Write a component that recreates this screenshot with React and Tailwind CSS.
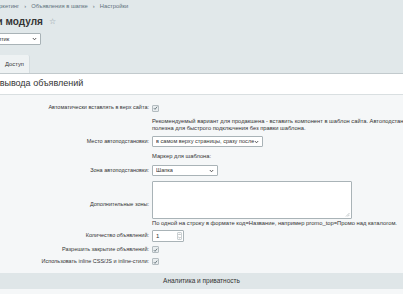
import React from 'react';

// Bitrix-style module settings page, cropped on the left edge
function Check() {
    return (
        <span className="inline-flex items-center justify-center w-[7px] h-[7px] border border-[#b3bcc0] bg-[#e9edef] rounded-[1px]">
            <svg width="6" height="6" viewBox="0 0 6 6">
                <path d="M1 3.2 L2.4 4.6 L5 1.4" stroke="#55666e" strokeWidth="1" fill="none" />
            </svg>
        </span>
    );
}

function Chevron() {
    return (
        <svg width="5" height="4" viewBox="0 0 5 4" className="shrink-0">
            <path d="M0.8 1 L2.5 2.8 L4.2 1" stroke="#333" strokeWidth="0.8" fill="none" />
        </svg>
    );
}

function Select({ width, children }) {
    return (
        <div
            className="h-[11px] bg-white border border-[#a9b3b7] rounded-[1px] flex items-center justify-between pl-[3px] pr-[3px] text-[5.6px] text-[#333] leading-none"
            style={{ width }}
        >
            <span className="whitespace-nowrap overflow-hidden">{children}</span>
            <Chevron />
        </div>
    );
}

function Row({ label, children, className = 'items-center' }) {
    return (
        <div className={`flex ${className}`}>
            <div className="w-[152px] shrink-0 text-right pr-[3px] text-[5.5px] leading-none text-[#333] whitespace-nowrap">{label}</div>
            <div className="flex-1 min-w-0">{children}</div>
        </div>
    );
}

export default function App() {
    return (
        <div className="w-[403px] h-[294px] overflow-hidden bg-[#e1e8ea] font-['Liberation_Sans',Arial,sans-serif] text-[#333]">
            {/* breadcrumbs */}
            <div className="h-[12px] flex items-center gap-[5px] -ml-[9px] text-[5.8px] text-[#60717b] whitespace-nowrap pt-[1px]">
                <span>Маркетинг</span>
                <span>›</span>
                <span>Объявления в шапке</span>
                <span>›</span>
                <span>Настройки</span>
            </div>

            {/* title */}
            <div className="h-[19px] flex items-center -ml-[50px] whitespace-nowrap">
                <span className="text-[10px] font-bold text-[#333]">Настройки модуля</span>
                <span className="ml-[6px] text-[8px] text-[#8a979e] leading-none">☆</span>
            </div>

            {/* site select */}
            <div className="mt-[2px] -ml-[20px]">
                <div className="w-[61px] h-[12px] bg-white border border-[#a9b3b7] rounded-[1px] flex items-center justify-between px-[3px] text-[5.8px] text-[#333]">
                    <span>Аналитик</span>
                    <Chevron />
                </div>
            </div>

            {/* tabs */}
            <div className="mt-[10px] flex items-end h-[18px]">
                <div className="h-[18px] w-[30px] bg-[#eef2f3] flex items-center justify-center text-[5.8px] text-[#333] rounded-tr-[2px] border-r border-[#d5dde0]">
                    Доступ
                </div>
            </div>

            {/* panel */}
            <div className="border-t border-[#c2cacd]">
                <div className="bg-white h-[21px] flex items-center -ml-[47px] text-[9px] text-[#333] whitespace-nowrap border-b border-[#d9dfe1]">
                    Настройки вывода объявлений
                </div>

                <div className="bg-[#f5f7f8] pt-[9px] pb-[10px]">
                    <Row label="Автоматически вставлять в верх сайта:">
                        <div className="h-[8px] flex items-center"><Check /></div>
                    </Row>

                    <Row label="">
                        <div className="mt-[6px] text-[5.75px] leading-[6.5px] text-[#333] whitespace-nowrap">
                            <div>Рекомендуемый вариант для продакшена - вставить компонент в шаблон сайта. Автоподстановка</div>
                            <div>полезна для быстрого подключения без правки шаблона.</div>
                        </div>
                    </Row>

                    <div className="mt-[5px]">
                        <Row label="Место автоподстановки:">
                            <Select width={111}>в самом верху страницы, сразу после &lt;body&gt;</Select>
                        </Row>
                    </div>

                    <Row label="">
                        <div className="mt-[6px] h-[7px] text-[5.8px] leading-[7px] whitespace-nowrap">Маркер для шаблона:</div>
                    </Row>

                    <div className="mt-[5px]">
                        <Row label="Зона автоподстановки:">
                            <Select width={66}>Шапка</Select>
                        </Row>
                    </div>

                    <div className="mt-[5px]">
                        <Row label={<span className="block pt-[21px]">Дополнительные зоны:</span>} className="items-start">
                            <div className="w-[200px] h-[38px] bg-white border border-[#a9b3b7] rounded-[1px] relative">
                                <svg width="5" height="5" viewBox="0 0 5 5" className="absolute right-[1px] bottom-[1px]">
                                    <path d="M1 4.5 L4.5 1 M2.8 4.5 L4.5 2.8" stroke="#9aa4a8" strokeWidth="0.6" />
                                </svg>
                            </div>
                        </Row>
                    </div>

                    <Row label="">
                        <div className="mt-[1px] text-[5.8px] leading-[7px] whitespace-nowrap">
                            По одной на строку в формате код=Название, например promo_top=Промо над каталогом.
                        </div>
                    </Row>

                    <div className="mt-[3px]">
                        <Row label="Количество объявлений:">
                            <div className="w-[32px] h-[12px] bg-white border border-[#a9b3b7] rounded-[1px] flex items-center justify-between pl-[3px] pr-[1px] text-[6px]">
                                <span>1</span>
                                <span className="flex flex-col items-center justify-center w-[5px] h-[8px] border border-[#c9d0d3] rounded-[1px]">
                                    <svg width="3" height="6" viewBox="0 0 3 6">
                                        <path d="M0.4 2 L1.5 0.9 L2.6 2 M0.4 4 L1.5 5.1 L2.6 4" stroke="#666" strokeWidth="0.5" fill="none" />
                                    </svg>
                                </span>
                            </div>
                        </Row>
                    </div>

                    <div className="mt-[3px]">
                        <Row label="Разрешить закрытие объявлений:">
                            <div className="h-[9px] flex items-center"><Check /></div>
                        </Row>
                    </div>

                    <div className="mt-[3px]">
                        <Row label="Использовать inline CSS/JS и inline-стили:">
                            <div className="h-[9px] flex items-center"><Check /></div>
                        </Row>
                    </div>

                    <div className="mt-[7px] h-[16px] bg-[#dfe6e8] flex items-center justify-center text-[6.5px] text-[#333]">
                        <span>Аналитика и приватность</span>
                    </div>
                </div>
            </div>
        </div>
    );
}
